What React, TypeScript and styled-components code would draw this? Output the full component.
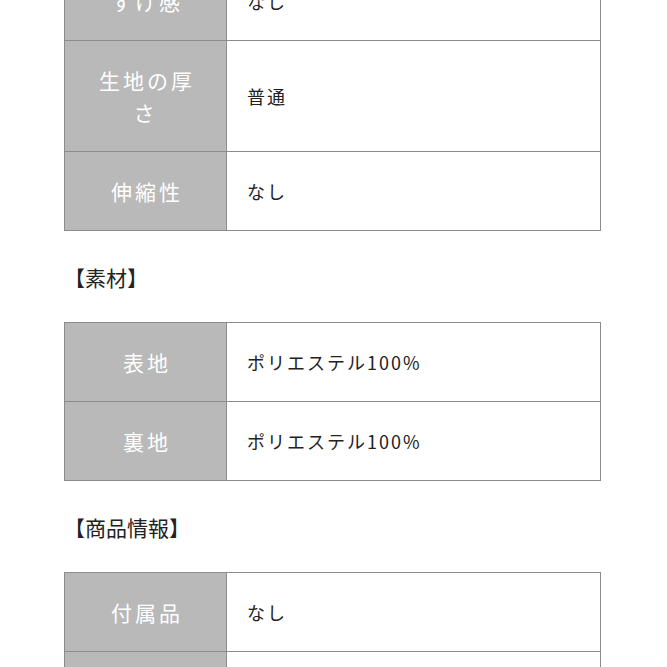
import React from "react";
import styled, { createGlobalStyle } from "styled-components";

const Global = createGlobalStyle`
  html, body { margin: 0; padding: 0; background: #fff; }
  body { font-family: "Noto Sans CJK JP", "Noto Sans", sans-serif; overflow: hidden; }
  *, *::before, *::after { box-sizing: border-box; }
`;

const Page = styled.div`
  width: 537px;
  margin: -39px 0 0 64px;
`;

const SpecTable = styled.table`
  width: 100%;
  border-collapse: collapse;
  table-layout: fixed;
`;

const LabelCell = styled.th`
  width: 162px;
  background: #b9b9b9;
  color: #fff;
  font-weight: 400;
  font-size: 21px;
  line-height: 32px;
  letter-spacing: 3px;
  text-indent: 3px;
  text-align: center;
  border: 1px solid #8c8c8c;
  padding: 23px 28px;
`;

const ValueCell = styled.td`
  color: #222;
  font-size: 18px;
  line-height: 32px;
  letter-spacing: 2px;
  border: 1px solid #8c8c8c;
  padding: 23px 20px;
`;

const Heading = styled.div`
  color: #222;
  font-size: 21px;
  line-height: 28px;
  padding: 32px 0 31px;
`;

type Row = [string, string];

const Table = ({ rows }: { rows: Row[] }) => (
  <SpecTable>
    <tbody>
      {rows.map(([k, v], i) => (
        <tr key={i}>
          <LabelCell>{k}</LabelCell>
          <ValueCell>{v}</ValueCell>
        </tr>
      ))}
    </tbody>
  </SpecTable>
);

export default function App() {
  return (
    <>
      <Global />
      <Page>
        <Table
          rows={[
            ["すけ感", "なし"],
            ["生地の厚さ", "普通"],
            ["伸縮性", "なし"],
          ]}
        />
        <Heading>【素材】</Heading>
        <Table
          rows={[
            ["表地", "ポリエステル100%"],
            ["裏地", "ポリエステル100%"],
          ]}
        />
        <Heading>【商品情報】</Heading>
        <Table
          rows={[
            ["付属品", "なし"],
            ["原産国", "中国"],
          ]}
        />
      </Page>
    </>
  );
}
